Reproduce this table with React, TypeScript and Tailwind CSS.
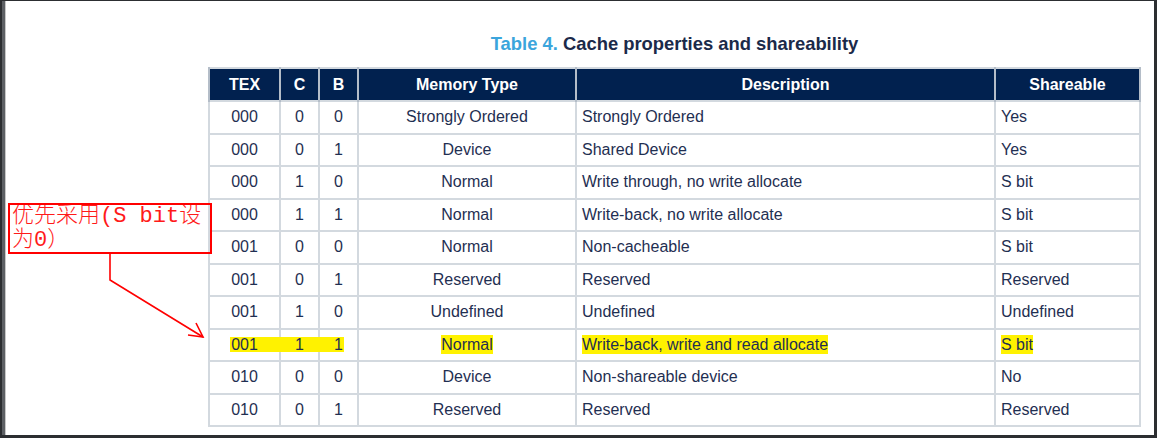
import React from "react";

type Row = {
  tex: string;
  c: string;
  b: string;
  mem: string;
  desc: string;
  share: string;
  hl?: boolean;
};

const rows: Row[] = [
  { tex: "000", c: "0", b: "0", mem: "Strongly Ordered", desc: "Strongly Ordered", share: "Yes" },
  { tex: "000", c: "0", b: "1", mem: "Device", desc: "Shared Device", share: "Yes" },
  { tex: "000", c: "1", b: "0", mem: "Normal", desc: "Write through, no write allocate", share: "S bit" },
  { tex: "000", c: "1", b: "1", mem: "Normal", desc: "Write-back, no write allocate", share: "S bit" },
  { tex: "001", c: "0", b: "0", mem: "Normal", desc: "Non-cacheable", share: "S bit" },
  { tex: "001", c: "0", b: "1", mem: "Reserved", desc: "Reserved", share: "Reserved" },
  { tex: "001", c: "1", b: "0", mem: "Undefined", desc: "Undefined", share: "Undefined" },
  { tex: "001", c: "1", b: "1", mem: "Normal", desc: "Write-back, write and read allocate", share: "S bit", hl: true },
  { tex: "010", c: "0", b: "0", mem: "Device", desc: "Non-shareable device", share: "No" },
  { tex: "010", c: "0", b: "1", mem: "Reserved", desc: "Reserved", share: "Reserved" },
];

const headers = ["TEX", "C", "B", "Memory Type", "Description", "Shareable"];

function Mark({ on, children }: { on?: boolean; children: React.ReactNode }) {
  if (!on) return <>{children}</>;
  return <span className="bg-[#fff200] py-[1px]">{children}</span>;
}

export default function App() {
  return (
    <div className="w-[1157px] h-[438px] bg-[#2c2e31] pt-[1px] pl-[2px] pr-[4px] pb-[3px] flex">
      <div className="flex-1 flex border-l-[3px] border-[#5d6064]">
        <div className="flex-1 relative bg-white border-l border-[#c8c8c8] flex flex-col pl-[202px] pr-[13px] pt-[32px] font-['Liberation_Sans',Arial,sans-serif]">
          {/* Title */}
          <div className="text-center text-[18.4px] leading-[22px] font-bold text-[#1b2a4a] mb-[12px]">
            <span className="text-[#3ba5dc]">Table 4.</span> Cache properties and shareability
          </div>

          {/* Table */}
          <table className="table-fixed border-collapse w-[931px] border-2 border-[#d3d9df] text-[16px] text-[#1f2f52]">
            <colgroup>
              <col className="w-[71px]" />
              <col className="w-[39px]" />
              <col className="w-[39px]" />
              <col className="w-[218px]" />
              <col className="w-[419px]" />
              <col className="w-[145px]" />
            </colgroup>
            <thead>
              <tr className="h-[33px] bg-[#01214f] text-white font-bold">
                {headers.map((h) => (
                  <th key={h} className="border-x-2 border-[#b4bdc8] text-center font-bold p-0">
                    {h}
                  </th>
                ))}
              </tr>
            </thead>
            <tbody>
              {rows.map((r, i) => (
                <tr key={i} className="h-[32.5px]">
                  <td className="border-2 border-[#d3d9df] text-center p-0 relative">
                    {r.hl && <span className="absolute left-[20px] top-[7px] w-[114px] h-[15px] bg-[#fff200]" />}
                    <span className="relative">{r.tex}</span>
                  </td>
                  <td className="border-2 border-[#d3d9df] text-center p-0">
                    <span className="relative">{r.c}</span>
                  </td>
                  <td className="border-2 border-[#d3d9df] text-center p-0">
                    <span className="relative">{r.b}</span>
                  </td>
                  <td className="border-2 border-[#d3d9df] text-center p-0">
                    <Mark on={r.hl}>{r.mem}</Mark>
                  </td>
                  <td className="border-2 border-[#d3d9df] text-left pl-[5px] py-0">
                    <Mark on={r.hl}>{r.desc}</Mark>
                  </td>
                  <td className="border-2 border-[#d3d9df] text-left pl-[5px] py-0">
                    <Mark on={r.hl}>{r.share}</Mark>
                  </td>
                </tr>
              ))}
            </tbody>
          </table>

          {/* Annotation callout */}
          <div className="absolute left-[2px] top-[202px] w-[204px] h-[51px] border-2 border-[#ff0000] pl-[2px] text-[#ff1a1a] text-[22px] leading-[24px] whitespace-nowrap overflow-hidden font-['Liberation_Mono','Noto_Sans_CJK_SC',monospace] font-light">
            <div>优先采用(S bit设</div>
            <div>为0）</div>
          </div>
          <svg
            className="absolute left-0 top-0 pointer-events-none"
            width="260"
            height="360"
            viewBox="0 0 260 360"
          >
            <polyline
              points="104,253 104,279 197,336"
              fill="none"
              stroke="#ff0000"
              strokeWidth="1.6"
            />
            <polyline
              points="182,334 197,336 190,322"
              fill="none"
              stroke="#ff0000"
              strokeWidth="1.6"
            />
          </svg>
        </div>
      </div>
    </div>
  );
}
